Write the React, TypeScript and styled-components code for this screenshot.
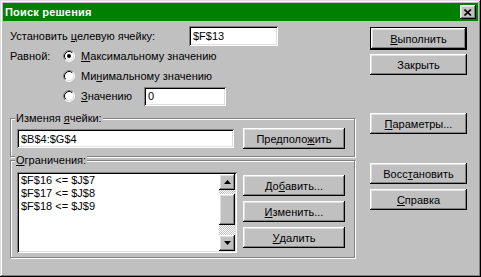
import React from 'react';
import styled, { createGlobalStyle, css } from 'styled-components';

const GlobalStyle = createGlobalStyle`
  html, body {
    margin: 0;
    padding: 0;
    background: #c0c0c0;
  }
  body {
    font-family: "Liberation Sans", Arial, sans-serif;
    font-size: 11px;
    color: #000;
  }
`;

const raised = css`
  box-shadow:
    inset -1px -1px 0 #000,
    inset 1px 1px 0 #fff,
    inset -2px -2px 0 #808080,
    inset 2px 2px 0 #dfdfdf;
`;

const sunken = css`
  box-shadow:
    inset 1px 1px 0 #808080,
    inset -1px -1px 0 #fff,
    inset 2px 2px 0 #000,
    inset -2px -2px 0 #dfdfdf;
`;

const Window = styled.div`
  width: 481px;
  height: 277px;
  box-sizing: border-box;
  padding: 3px;
  background: #c0c0c0;
  display: flex;
  flex-direction: column;
  box-shadow:
    inset -1px -1px 0 #000,
    inset 1px 1px 0 #dfdfdf,
    inset -2px -2px 0 #808080,
    inset 2px 2px 0 #fff;
`;

const TitleBar = styled.div`
  height: 18px;
  background: #008000;
  display: flex;
  align-items: center;
  justify-content: space-between;
  padding: 0 2px;
`;

const Title = styled.span`
  color: #fff;
  font-weight: bold;
  font-size: 11px;
  letter-spacing: 0.2px;
`;

const CloseButton = styled.div`
  width: 16px;
  height: 14px;
  background: #c0c0c0;
  display: flex;
  align-items: center;
  justify-content: center;
  ${raised}
`;

const Body = styled.div`
  display: flex;
  padding: 5px 0 0 7px;
`;

const LeftColumn = styled.div`
  width: 345px;
  display: flex;
  flex-direction: column;
`;

const RightColumn = styled.div`
  width: 97px;
  margin-left: 15px;
  padding-top: 1px;
  display: flex;
  flex-direction: column;
`;

const FieldRow = styled.div`
  display: flex;
  align-items: center;
  height: 20px;
`;

const Label = styled.span<{ $width?: number }>`
  width: ${({ $width }) => ($width ? `${$width}px` : 'auto')};
  flex-shrink: 0;
  white-space: nowrap;
`;

const U = styled.span`
  text-decoration: underline;
  text-underline-offset: 1px;
`;

const TextField = styled.div<{ $width: number; $height?: number }>`
  width: ${({ $width }) => $width}px;
  height: ${({ $height }) => $height ?? 20}px;
  box-sizing: border-box;
  background: #fff;
  padding: 0 4px;
  display: flex;
  align-items: center;
  white-space: nowrap;
  ${sunken}
`;

const RadioBlock = styled.div`
  display: flex;
`;

const RadioList = styled.div`
  display: flex;
  flex-direction: column;
`;

const RadioRow = styled.div`
  display: flex;
  align-items: center;
  height: 20px;
  gap: 6px;
`;

const GroupBox = styled.div<{ $top: number; $height: number }>`
  position: relative;
  margin-top: ${({ $top }) => $top}px;
  height: ${({ $height }) => $height}px;
  box-sizing: border-box;
  border: 1px solid #808080;
  box-shadow: inset 1px 1px 0 #fff, 1px 1px 0 #fff;
  padding: 0 0 0 6px;
  display: flex;
`;

const Legend = styled.span`
  position: absolute;
  top: -7px;
  left: 4px;
  padding: 0 1px;
  line-height: 13px;
  background: #c0c0c0;
`;

const ChangeRow = styled.div`
  display: flex;
  align-items: center;
  gap: 9px;
  padding-top: 9px;
  height: 21px;
`;

const ConstraintArea = styled.div`
  display: flex;
  gap: 6px;
  padding-top: 11px;
`;

const ListBox = styled.div`
  width: 220px;
  height: 81px;
  box-sizing: border-box;
  background: #fff;
  padding: 2px;
  display: flex;
  ${sunken}
`;

const ListItems = styled.div`
  flex: 1;
  padding-left: 2px;
  line-height: 13px;
`;

const ScrollBar = styled.div`
  width: 16px;
  display: flex;
  flex-direction: column;
`;

const ScrollButton = styled.div`
  width: 16px;
  height: 16px;
  background: #c0c0c0;
  display: flex;
  align-items: center;
  justify-content: center;
  ${raised}
`;

const ScrollTrack = styled.div`
  flex: 1;
  padding-top: 4px;
  background-color: #c0c0c0;
  background-image: conic-gradient(#fff 25%, #c0c0c0 0 50%, #fff 0 75%, #c0c0c0 0);
  background-size: 2px 2px;
`;

const ScrollThumb = styled.div`
  height: 31px;
  background: #c0c0c0;
  ${raised}
`;

const ButtonStack = styled.div`
  display: flex;
  flex-direction: column;
  gap: 5px;
  padding-top: 3px;
`;

const Button = styled.div<{ $width?: number; $isDefault?: boolean; $top?: number }>`
  width: ${({ $width }) => $width ?? 97}px;
  height: ${({ $isDefault }) => ($isDefault ? 23 : 21)}px;
  margin-top: ${({ $top }) => $top ?? 0}px;
  box-sizing: border-box;
  background: #c0c0c0;
  display: flex;
  align-items: center;
  justify-content: center;
  white-space: nowrap;
  flex-shrink: 0;
  ${({ $isDefault }) =>
    $isDefault
      ? css`
          border: 1px solid #000;
          ${raised}
        `
      : raised}
`;

const Radio: React.FC<{ checked?: boolean }> = ({ checked }) => (
  <svg width="12" height="12" viewBox="0 0 12 12">
    <circle cx="6" cy="6" r="5" fill="#fff" />
    <path d="M2.11 9.89 A5.5 5.5 0 0 1 9.89 2.11" fill="none" stroke="#808080" strokeWidth="1" />
    <path d="M9.89 2.11 A5.5 5.5 0 0 1 2.11 9.89" fill="none" stroke="#fff" strokeWidth="1" />
    <path d="M2.82 9.18 A4.5 4.5 0 0 1 9.18 2.82" fill="none" stroke="#000" strokeWidth="1" />
    <path d="M9.18 2.82 A4.5 4.5 0 0 1 2.82 9.18" fill="none" stroke="#dfdfdf" strokeWidth="1" />
    {checked && <circle cx="6" cy="6" r="2" fill="#000" />}
  </svg>
);

const Arrow: React.FC<{ down?: boolean }> = ({ down }) => (
  <svg width="7" height="4" viewBox="0 0 7 4">
    <polygon points={down ? '0,0 7,0 3.5,4' : '0,4 7,4 3.5,0'} fill="#000" />
  </svg>
);

const constraints = ['$F$16 <= $J$7', '$F$17 <= $J$8', '$F$18 <= $J$9'];

const App: React.FC = () => (
  <>
    <GlobalStyle />
    <Window>
      <TitleBar>
        <Title>Поиск решения</Title>
        <CloseButton>
          <svg width="8" height="7" viewBox="0 0 8 7">
            <path d="M0.5 0.5 L7 6.5 M7 0.5 L0.5 6.5" stroke="#000" strokeWidth="1.6" />
          </svg>
        </CloseButton>
      </TitleBar>
      <Body>
        <LeftColumn>
          <FieldRow>
            <Label $width={179}>
              Установить <U>ц</U>елевую ячейку:
            </Label>
            <TextField $width={89}>$F$13</TextField>
          </FieldRow>
          <RadioBlock>
            <Label $width={53} style={{ lineHeight: '20px' }}>
              Равной:
            </Label>
            <RadioList>
              <RadioRow>
                <Radio checked />
                <span>
                  <U>М</U>аксимальному значению
                </span>
              </RadioRow>
              <RadioRow>
                <Radio />
                <span>
                  Ми<U>н</U>имальному значению
                </span>
              </RadioRow>
              <RadioRow>
                <Radio />
                <Label $width={57}>
                  <U>З</U>начению
                </Label>
                <TextField $width={82} $height={19}>
                  0
                </TextField>
              </RadioRow>
            </RadioList>
          </RadioBlock>
          <GroupBox $top={12} $height={39}>
            <Legend>
              Изменяя <U>я</U>чейки:
            </Legend>
            <ChangeRow>
              <TextField $width={217} $height={19}>
                $B$4:$G$4
              </TextField>
              <Button $width={102}>
                Предполо<U>ж</U>ить
              </Button>
            </ChangeRow>
          </GroupBox>
          <GroupBox $top={3} $height={98}>
            <Legend>
              <U>О</U>граничения:
            </Legend>
            <ConstraintArea>
              <ListBox>
                <ListItems>
                  {constraints.map((c) => (
                    <div key={c}>{c}</div>
                  ))}
                </ListItems>
                <ScrollBar>
                  <ScrollButton>
                    <Arrow />
                  </ScrollButton>
                  <ScrollTrack>
                    <ScrollThumb />
                  </ScrollTrack>
                  <ScrollButton>
                    <Arrow down />
                  </ScrollButton>
                </ScrollBar>
              </ListBox>
              <ButtonStack>
                <Button $width={102}>
                  До<U>б</U>авить...
                </Button>
                <Button $width={102}>
                  <U>И</U>зменить...
                </Button>
                <Button $width={102}>
                  <U>У</U>далить
                </Button>
              </ButtonStack>
            </ConstraintArea>
          </GroupBox>
        </LeftColumn>
        <RightColumn>
          <Button $isDefault>
            <U>В</U>ыполнить
          </Button>
          <Button $top={4}>Закрыть</Button>
          <Button $top={38}>
            <U>П</U>араметры...
          </Button>
          <Button $top={29}>
            Восс<U>т</U>ановить
          </Button>
          <Button $top={5}>
            <U>С</U>правка
          </Button>
        </RightColumn>
      </Body>
    </Window>
  </>
);

export default App;
